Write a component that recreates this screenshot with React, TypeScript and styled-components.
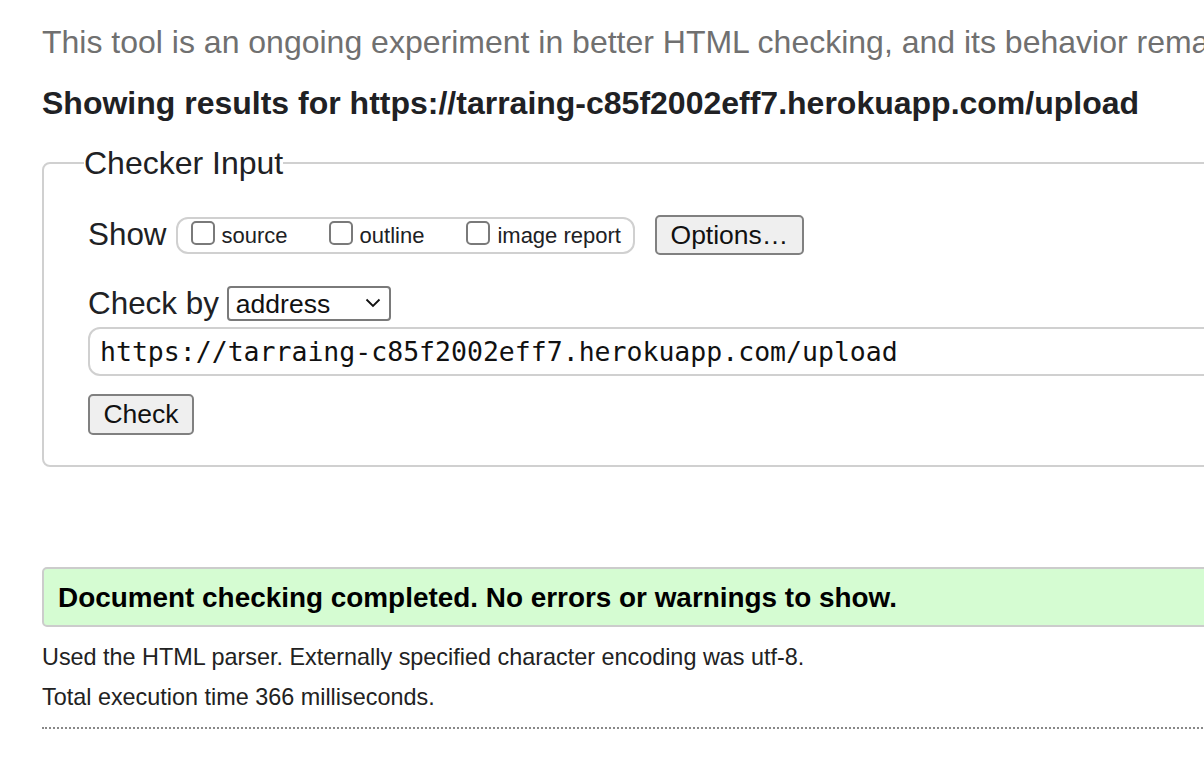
import React from "react";
import styled, { createGlobalStyle } from "styled-components";

const Global = createGlobalStyle`
  html, body { margin: 0; padding: 0; background: #ffffff; overflow: hidden; }
  body { font-family: "Liberation Sans", Arial, sans-serif; color: #222; }
`;

const Page = styled.div`
  width: 1400px;
  padding-left: 42px;
  box-sizing: border-box;
  display: flex;
  flex-direction: column;
  align-items: flex-start;
`;

const Intro = styled.p`
  margin: 22px 0 0;
  font-size: 32px;
  line-height: 40px;
  color: #707070;
  white-space: nowrap;
`;

const Heading = styled.h2`
  margin: 21px 0 0;
  font-size: 32px;
  line-height: 40px;
  font-weight: bold;
  color: #202124;
  white-space: nowrap;
`;

const Fieldset = styled.fieldset`
  margin: 20px 0 0;
  width: 1216px;
  box-sizing: border-box;
  border: 2px solid #d0d0d0;
  border-radius: 8px;
  padding: 0 0 30px 44px;
  min-inline-size: 0;
`;

const Legend = styled.legend`
  margin-left: -4px;
  padding: 0;
  font-size: 32px;
  line-height: 40px;
  color: #202124;
`;

const Row = styled.div<{ $top: number; $h: number }>`
  display: flex;
  align-items: center;
  height: ${(p) => p.$h}px;
  margin-top: ${(p) => p.$top}px;
`;

const RowLabel = styled.span<{ $gap: number }>`
  font-size: 31.4px;
  color: #202124;
  margin-right: ${(p) => p.$gap}px;
`;

const Group = styled.div`
  display: flex;
  align-items: center;
  height: 37px;
  box-sizing: border-box;
  border: 2px solid #d0d0d0;
  border-radius: 12px;
  padding: 2px 12px 0 13px;
`;

const CheckLabel = styled.label<{ $gap: number }>`
  display: flex;
  align-items: center;
  font-size: 22px;
  color: #202124;
  margin-left: ${(p) => p.$gap}px;
  white-space: nowrap;
`;

const Box = styled.input`
  appearance: none;
  width: 24px;
  height: 24px;
  margin: -6px 7px 0 0;
  box-sizing: border-box;
  border: 2px solid #7a7a7a;
  border-radius: 5px;
  background: #fff;
`;

const Button = styled.button<{ $w: number; $h: number; $left?: number }>`
  width: ${(p) => p.$w}px;
  height: ${(p) => p.$h}px;
  margin-left: ${(p) => p.$left ?? 0}px;
  box-sizing: border-box;
  border: 2px solid #808080;
  border-radius: 5px;
  background: #efefef;
  font-family: "Liberation Sans", Arial, sans-serif;
  font-size: 26.5px;
  color: #111;
  padding: 0;
`;

const SelectWrap = styled.div`
  position: relative;
  width: 164px;
  height: 35px;
`;

const Select = styled.select`
  appearance: none;
  width: 100%;
  height: 100%;
  box-sizing: border-box;
  border: 2px solid #7a7a7a;
  border-radius: 4px;
  background: #fff;
  padding: 0 0 0 7px;
  font-family: "Liberation Sans", Arial, sans-serif;
  font-size: 26.5px;
  color: #111;
`;

const Chevron = styled.svg`
  position: absolute;
  right: 10px;
  top: 12px;
  pointer-events: none;
`;

const UrlInput = styled.input`
  display: block;
  width: 1200px;
  height: 49px;
  margin-top: 6px;
  box-sizing: border-box;
  border: 2px solid #d0d0d0;
  border-radius: 12px;
  padding: 0 10px;
  font-family: "DejaVu Sans Mono", monospace;
  font-size: 26.5px;
  color: #111;
  background: #fff;
`;

const Success = styled.div`
  margin-top: 100px;
  width: 1300px;
  height: 60px;
  box-sizing: border-box;
  border: 2px solid #cccccc;
  border-radius: 5px;
  background: #d5fcd2;
  padding: 2px 0 0 14px;
  display: flex;
  align-items: center;
  font-size: 27.9px;
  font-weight: bold;
  color: #000;
  white-space: nowrap;
`;

const Info = styled.p<{ $top: number }>`
  margin: ${(p) => p.$top}px 0 0;
  font-size: 23.4px;
  line-height: 30px;
  color: #222;
  white-space: nowrap;
`;

const Rule = styled.hr`
  margin: 15px 0 0;
  width: 1300px;
  border: 0;
  border-top: 2px dotted #888;
`;

export default function App() {
  return (
    <>
      <Global />
      <Page>
        <Intro>
          This tool is an ongoing experiment in better HTML checking, and its behavior remains subject to change
        </Intro>
        <Heading>Showing results for https://tarraing-c85f2002eff7.herokuapp.com/upload</Heading>
        <Fieldset>
          <Legend>Checker Input</Legend>
          <Row $top={32} $h={40}>
            <RowLabel $gap={9}>Show</RowLabel>
            <Group>
              <CheckLabel $gap={0}>
                <Box type="checkbox" />
                source
              </CheckLabel>
              <CheckLabel $gap={41}>
                <Box type="checkbox" />
                outline
              </CheckLabel>
              <CheckLabel $gap={42}>
                <Box type="checkbox" />
                image report
              </CheckLabel>
            </Group>
            <Button $w={149} $h={40} $left={20}>
              Options…
            </Button>
          </Row>
          <Row $top={31} $h={35}>
            <RowLabel $gap={8}>Check by</RowLabel>
            <SelectWrap>
              <Select defaultValue="address">
                <option value="address">address</option>
                <option value="file">file upload</option>
                <option value="text">text input</option>
              </Select>
              <Chevron width="16" height="10" viewBox="0 0 16 10">
                <path d="M1.5 1.5 L8 8 L14.5 1.5" fill="none" stroke="#111" strokeWidth="1.8" />
              </Chevron>
            </SelectWrap>
          </Row>
          <UrlInput defaultValue="https://tarraing-c85f2002eff7.herokuapp.com/upload" />
          <Row $top={18} $h={41}>
            <Button $w={106} $h={41}>Check</Button>
          </Row>
        </Fieldset>
        <Success>Document checking completed. No errors or warnings to show.</Success>
        <Info $top={15}>Used the HTML parser. Externally specified character encoding was utf-8.</Info>
        <Info $top={10}>Total execution time 366 milliseconds.</Info>
        <Rule />
      </Page>
    </>
  );
}
